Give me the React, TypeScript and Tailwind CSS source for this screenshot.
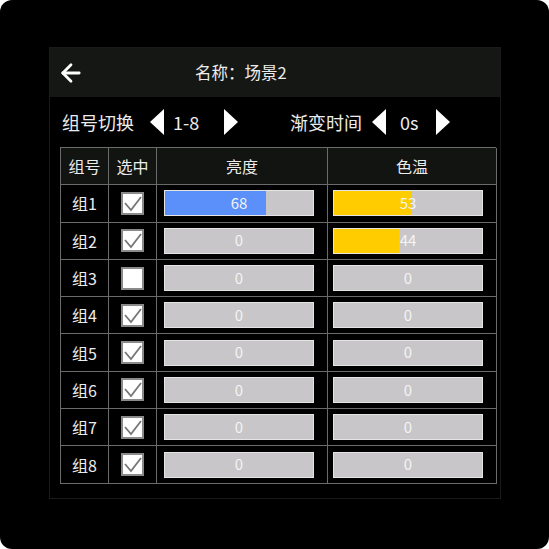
import { ArrowLeft } from 'lucide-react'

const rows = [
  { name: '组1', on: true, lum: 68, cct: 53 },
  { name: '组2', on: true, lum: 0, cct: 44 },
  { name: '组3', on: false, lum: 0, cct: 0 },
  { name: '组4', on: true, lum: 0, cct: 0 },
  { name: '组5', on: true, lum: 0, cct: 0 },
  { name: '组6', on: true, lum: 0, cct: 0 },
  { name: '组7', on: true, lum: 0, cct: 0 },
  { name: '组8', on: true, lum: 0, cct: 0 },
]

function Tri({ dir }: { dir: 'left' | 'right' }) {
  return (
    <svg width="14" height="26" viewBox="0 0 14 26">
      <polygon points={dir === 'left' ? '14,0 0,13 14,26' : '0,0 14,13 0,26'} fill="#ffffff" />
    </svg>
  )
}

function Bar({ value, fill }: { value: number; fill: string }) {
  return (
    <div className="relative w-[150px] h-[26px] bg-[#c8c6c9] border border-[#e4e4e4]">
      <div className="absolute left-0 top-0 bottom-0" style={{ width: `${value}%`, background: fill }} />
      <span className="absolute inset-0 flex items-center justify-center text-[15px] text-[#f4f4f4]">{value}</span>
    </div>
  )
}

function Check({ on }: { on: boolean }) {
  return (
    <div className="w-[23px] h-[23px] bg-white border-2 border-[#8a8a8a] flex items-center justify-center">
      {on && (
        <svg width="19" height="19" viewBox="0 0 19 19">
          <polyline points="2,9 8,16 18,3" fill="none" stroke="#777" strokeWidth="1.8" />
        </svg>
      )}
    </div>
  )
}

export default function App() {
  return (
    <div className="w-[549px] h-[549px] bg-white" style={{ fontFamily: '"Noto Sans CJK SC", "Noto Sans", sans-serif' }}>
      <div className="w-full h-full bg-black rounded-[12px] pt-[47px] pl-[49px]">
        <div className="w-[452px] h-[452px] border border-[#1a1a1a] flex flex-col text-[#ececec]">
          <div className="h-[49px] bg-[#141714] flex items-center">
            <ArrowLeft className="ml-[7px] w-[28px] h-[28px]" strokeWidth={2.4} color="#ffffff" />
            <div className="ml-[110px] text-[16.5px]">名称：场景2</div>
          </div>

          <div className="h-[50px] flex items-center text-[18px]">
            <span className="ml-[12px]">组号切换</span>
            <span className="ml-[16px]"><Tri dir="left" /></span>
            <span className="ml-[9px] w-[51px]">1-8</span>
            <Tri dir="right" />
            <span className="ml-[52px]">渐变时间</span>
            <span className="ml-[10px]"><Tri dir="left" /></span>
            <span className="ml-[14px] w-[36px]">0s</span>
            <Tri dir="right" />
          </div>

          <div className="ml-[10px] w-[436px] grid grid-cols-[48px_48px_171px_169px] grid-rows-[repeat(9,37.3px)] border-l border-t border-[#6b6b6b] text-[16px]">
            <div className="bg-[#111411] border-r border-b border-[#6b6b6b] flex items-center justify-center">组号</div>
            <div className="bg-[#111411] border-r border-b border-[#6b6b6b] flex items-center justify-center">选中</div>
            <div className="bg-[#111411] border-r border-b border-[#6b6b6b] flex items-center justify-center">亮度</div>
            <div className="bg-[#111411] border-r border-b border-[#6b6b6b] flex items-center justify-center">色温</div>
            {rows.map((r) => (
              <div key={r.name} className="contents">
                <div className="border-r border-b border-[#6b6b6b] flex items-center justify-center">{r.name}</div>
                <div className="border-r border-b border-[#6b6b6b] flex items-center justify-center">
                  <Check on={r.on} />
                </div>
                <div className="border-r border-b border-[#6b6b6b] flex items-center pl-[7px]">
                  <Bar value={r.lum} fill="#5b8ff9" />
                </div>
                <div className="border-r border-b border-[#6b6b6b] flex items-center pl-[5px]">
                  <Bar value={r.cct} fill="#ffcc00" />
                </div>
              </div>
            ))}
          </div>
        </div>
      </div>
    </div>
  )
}
